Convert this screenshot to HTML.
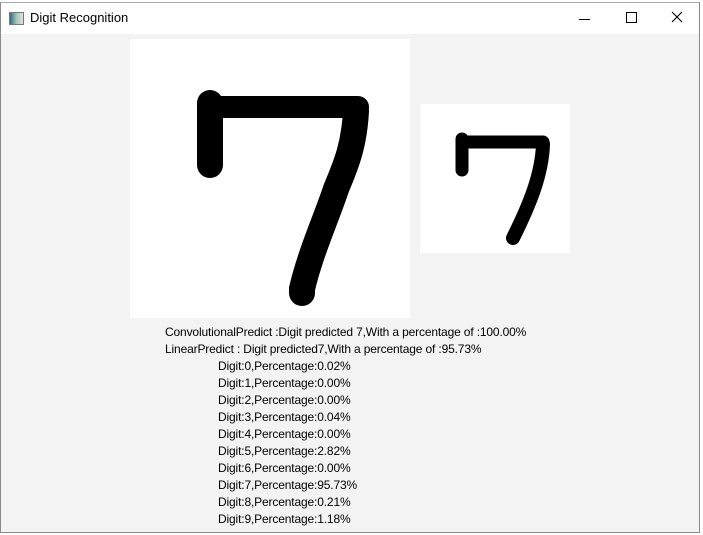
<!DOCTYPE html><html><head><style>
body{margin:0;width:703px;height:535px;overflow:hidden;background:#fff;font-family:"Liberation Sans",sans-serif;position:relative}
.win{position:absolute;left:0;top:2px;width:700px;height:531px;border:1px solid #8a8a8a;border-top:1px solid #aaa;background:#f3f3f3;box-sizing:border-box}
.title{position:absolute;left:0;top:0;right:0;height:31px;background:#fff}
.t{position:absolute;font-size:12px;color:#000;white-space:nowrap;line-height:17px;letter-spacing:-0.15px}
</style></head><body>
<div class="win">
<div class="title">
<div style="position:absolute;left:8px;top:9px;width:13px;height:11px;background:linear-gradient(90deg,#3a6a8a,#9fc7b8,#e0e0e0);border:1px solid #777"></div>
<div style="position:absolute;left:29px;top:7px;font-size:13px">Digit Recognition</div>
<div style="position:absolute;left:578px;top:16px;width:11px;height:1px;background:#000"></div>
<div style="position:absolute;left:625px;top:9px;width:9px;height:9px;border:1px solid #000"></div>
<svg style="position:absolute;left:670px;top:8px" width="12" height="12"><path d="M1 1L11 11M11 1L1 11" stroke="#000" stroke-width="1.1"/></svg>
</div>
</div>
<svg style="position:absolute;left:130px;top:39px" width="280" height="279" viewBox="0 0 280 279"><rect width="280" height="279" fill="#fff"/>
<g stroke="#000" fill="none" stroke-linecap="round" stroke-linejoin="round">
<path d="M80 64V126" stroke-width="26"/><path d="M80 68H228" stroke-width="22"/><path d="M226 72C224 110 214 130 206 150C196 180 180 215 172 250" stroke-width="26"/><path d="M172 250L172 254" stroke-width="26"/></g></svg>
<svg style="position:absolute;left:420px;top:104px" width="150" height="149"><rect width="150" height="149" fill="#fff"/>
<g stroke="#000" fill="none" stroke-linecap="round" stroke-linejoin="round">
<path d="M42 35V66" stroke-width="13"/><path d="M42 38H123" stroke-width="13"/><path d="M123 40C122 70 110 100 93 134" stroke-width="14"/></g></svg>
<div class="t" style="left:165px;top:324px">ConvolutionalPredict :Digit predicted 7,With a percentage of :100.00%</div>
<div class="t" style="left:165px;top:341px">LinearPredict : Digit predicted7,With a percentage of :95.73%</div>
<div class="t" style="left:218px;top:358px">Digit:0,Percentage:0.02%<br>Digit:1,Percentage:0.00%<br>Digit:2,Percentage:0.00%<br>Digit:3,Percentage:0.04%<br>Digit:4,Percentage:0.00%<br>Digit:5,Percentage:2.82%<br>Digit:6,Percentage:0.00%<br>Digit:7,Percentage:95.73%<br>Digit:8,Percentage:0.21%<br>Digit:9,Percentage:1.18%</div>
</body></html>
